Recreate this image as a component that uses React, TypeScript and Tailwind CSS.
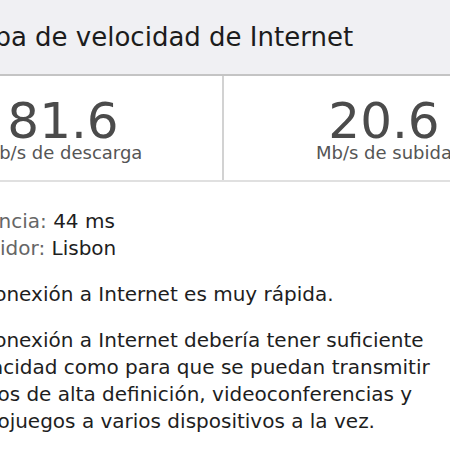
/**
 * Speed test result card (cropped view)
 */

const FONT = "font-['DejaVu_Sans',sans-serif]";

function Stat({ value, label, divider }: { value: string; label: string; divider?: boolean }) {
  return (
    <div
      className={`flex h-[104px] flex-col items-center pt-[22px] ${
        divider ? 'border-r-2 border-[#d2d2d2]' : ''
      }`}
    >
      <span className="text-[50px] leading-[46px] text-[#4b4b4b]">{value}</span>
      <span className="text-[18px] leading-[18px] text-[#555555]">{label}</span>
    </div>
  );
}

export default function App() {
  return (
    <div className={`h-[450px] w-[450px] overflow-hidden bg-white ${FONT}`}>
      <div className="-ml-[96px] w-[640px]">
        {/* Header */}
        <div className="flex h-[76px] items-center border-b-2 border-[#c4c4c4] bg-[#f0f0f3] px-8">
          <h1 className="text-[26px] leading-none font-normal text-[#1c1c1c]">
            Prueba de velocidad de Internet
          </h1>
        </div>

        {/* Results */}
        <div className="grid grid-cols-2 border-b-2 border-[#e0e0e0]">
          <Stat value="81.6" label="Mb/s de descarga" divider />
          <Stat value="20.6" label="Mb/s de subida" />
        </div>

        {/* Details */}
        <div className="pt-[26px] pl-[51px] text-[20px] leading-[27px] text-[#1e1e1e]">
          <p>
            <span className="text-[#666666]">Latencia: </span>44 ms
          </p>
          <p>
            <span className="text-[#666666]">Servidor: </span>Lisbon
          </p>
          <p className="mt-[19px]">Tu conexión a Internet es muy rápida.</p>
          <p className="mt-[19px]">
            Tu conexión a Internet debería tener suficiente
            <br />
            capacidad como para que se puedan transmitir
            <br />
            videos de alta definición, videoconferencias y
            <br />
            videojuegos a varios dispositivos a la vez.
          </p>
        </div>
      </div>
    </div>
  );
}
